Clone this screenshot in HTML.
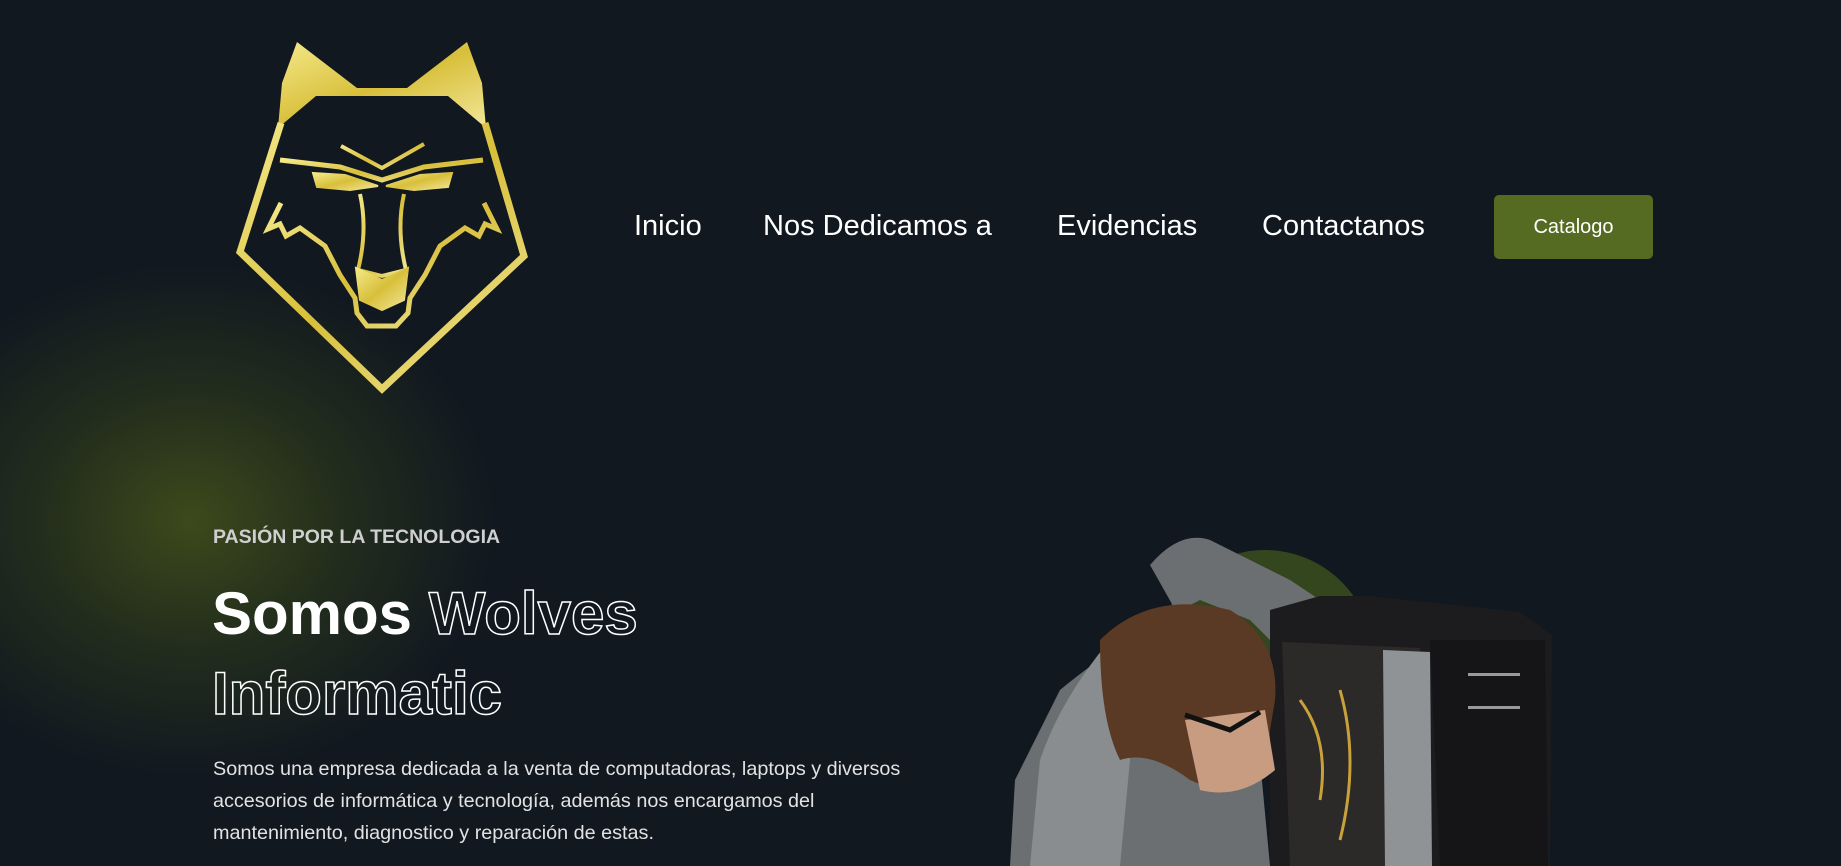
<!DOCTYPE html>
<html><head><meta charset="utf-8"><style>
html,body{margin:0;padding:0}
body{width:1841px;height:866px;overflow:hidden;background:#111820;position:relative;font-family:"Liberation Sans",Arial,sans-serif;color:#fff}
.glow{position:absolute;left:-120px;top:260px;width:620px;height:520px;border-radius:50%;background:radial-gradient(ellipse at center,rgba(75,90,25,.75) 0%,rgba(55,70,25,.45) 35%,rgba(17,24,32,0) 70%)}
.nav a{position:absolute;top:206px;font-size:29px;color:#fff;text-decoration:none;line-height:40px}
.btn{position:absolute;left:1494px;top:195px;width:159px;height:64px;background:#566b22;border-radius:5px;color:#fff;font-size:20px;line-height:64px;text-align:center}
.kicker{position:absolute;left:213px;top:526px;font-size:19.5px;font-weight:bold;color:#cfcfcf}
.h1{position:absolute;left:212px;top:574px;font-size:60px;font-weight:bold;line-height:80px}
.out{color:transparent;-webkit-text-stroke:1.5px #fff}
.p{position:absolute;left:213px;top:753px;font-size:19.8px;line-height:32px;color:#e2e2e2;width:700px}
</style></head><body>
<div class="glow"></div>
<svg style="position:absolute;left:0;top:0" width="1841" height="866">
<defs><linearGradient id="g" x1="0" y1="0" x2="1" y2="1"><stop offset="0" stop-color="#f4e98a"/><stop offset=".5" stop-color="#d8bf3a"/><stop offset="1" stop-color="#f2e79a"/></linearGradient></defs>
<path d="M282 83 L297 42 L357 88 L407 88 L467 42 L482 83 L486 128 L448 96 L316 96 L278 128 Z" fill="url(#g)"/>
<g fill="none" stroke="url(#g)" stroke-width="7" stroke-linejoin="miter">
<path d="M281 123 L240 252 L382 389 L524 256 L485 123"/>
<path d="M280 160 L340 167 L382 180 L424 167 L483 160" stroke-width="5"/>
<path d="M341 146 L382 168 L424 144" stroke-width="4"/>
<path d="M313 173 L345 175 L378 186 L350 190 L317 187Z" fill="url(#g)" stroke-width="2"/>
<path d="M452 173 L420 175 L386 186 L414 190 L448 187Z" fill="url(#g)" stroke-width="2"/>
<path d="M281 203 L268 229 L280 224 L286 236 L300 228 L325 246 L340 275 L355 298 L357 313 L367 326 L396 326 L408 313 L410 298 L425 275 L440 246 L465 228 L479 236 L485 224 L497 229 L484 203" stroke-width="5"/>
<path d="M360 194 Q368 230 358 270 L382 276 L406 270 Q396 230 404 194" stroke-width="4"/>
<path d="M356 268 L382 280 L408 268 L404 300 L382 310 L360 300Z" fill="url(#g)" stroke-width="2"/>
</g>
<circle cx="1265" cy="658" r="108" fill="#34461d"/>
<g>
<path d="M1150 565 Q1180 530 1210 540 L1290 580 L1320 600 L1300 640 L1270 640 L1250 620 L1200 600 Q1120 640 1060 690 L1015 780 L1010 866 L1270 866 L1260 760 Z" fill="#6c6f72"/>
<path d="M1110 640 Q1060 700 1040 760 L1030 866 L1120 866 L1130 760 Z" fill="#8a8d8f"/>
<path d="M1270 610 L1320 596 L1370 596 L1520 612 L1552 635 L1550 866 L1270 866 Z" fill="#1c1c1e"/>
<path d="M1282 642 L1420 648 L1430 866 L1290 866 Z" fill="#2b2a28"/>
<path d="M1383 650 L1430 652 L1432 866 L1385 866 Z" fill="#8f9396"/>
<path d="M1430 640 L1545 640 L1548 866 L1440 866 Z" fill="#151517"/>
<rect x="1468" y="673" width="52" height="3" fill="#999"/><rect x="1468" y="706" width="52" height="3" fill="#999"/>
<path d="M1300 700 Q1330 740 1320 800 M1340 690 Q1360 760 1340 840" stroke="#c9a13a" stroke-width="3" fill="none"/>
<path d="M1100 640 Q1150 590 1230 610 Q1280 640 1275 700 L1265 760 Q1230 800 1190 780 Q1150 750 1120 760 Q1100 720 1100 640Z" fill="#5a3a24"/>
<path d="M1185 720 L1265 710 L1275 770 Q1240 800 1200 790Z" fill="#c79c80"/>
<path d="M1185 715 L1230 730 L1260 712" stroke="#111" stroke-width="5" fill="none"/>
</g>
</svg>
<div class="nav">
<a style="left:634px">Inicio</a>
<a style="left:763px">Nos Dedicamos a</a>
<a style="left:1057px">Evidencias</a>
<a style="left:1262px">Contactanos</a>
</div>
<div class="btn">Catalogo</div>
<div class="kicker">PASIÓN POR LA TECNOLOGIA</div>
<div class="h1">Somos <span class="out">Wolves</span><br><span class="out">Informatic</span></div>
<div class="p">Somos una empresa dedicada a la venta de computadoras, laptops y diversos accesorios de informática y tecnología, además nos encargamos del mantenimiento, diagnostico y reparación de estas.</div>
</body></html>
